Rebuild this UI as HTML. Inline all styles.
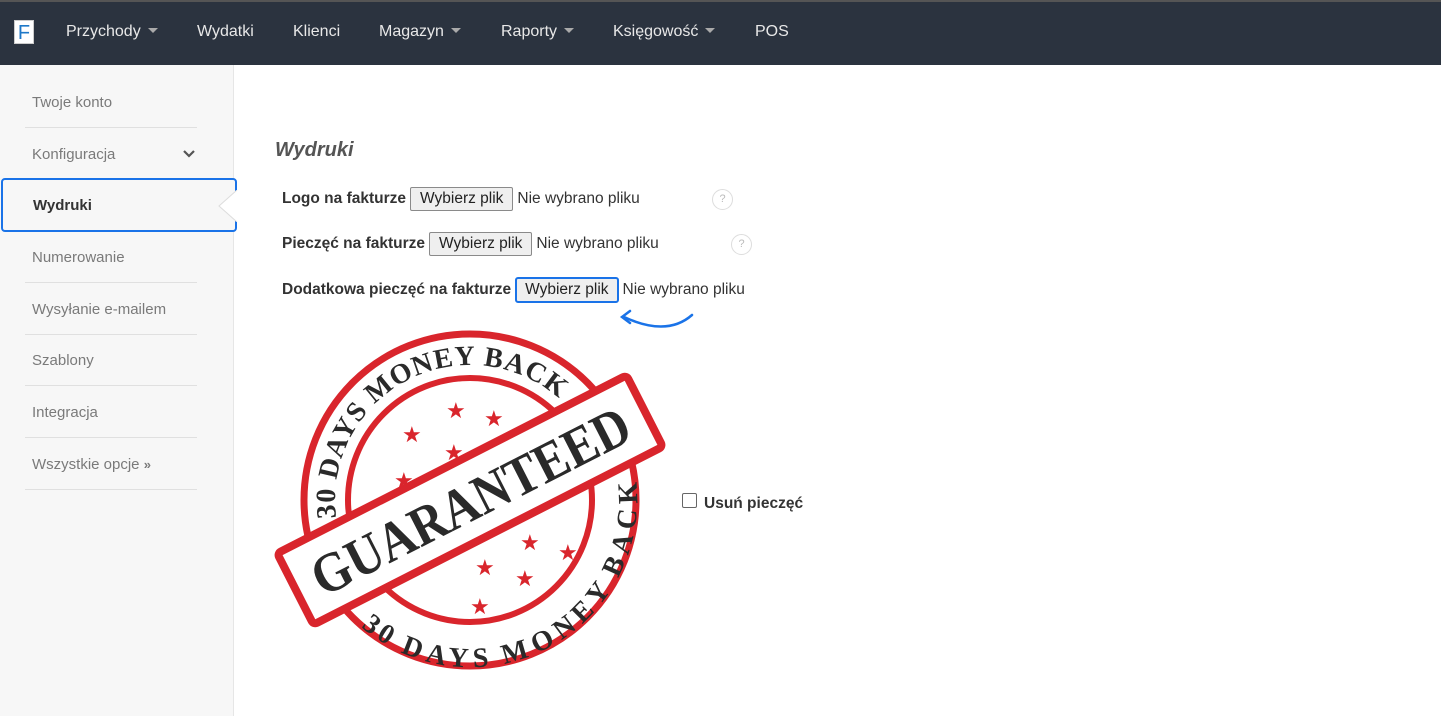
<!DOCTYPE html>
<html><head><meta charset="utf-8"><style>
*{margin:0;padding:0;box-sizing:border-box}
body{width:1441px;height:716px;overflow:hidden;background:#fff;font-family:"Liberation Sans",Arial,sans-serif;position:relative}
.top{position:absolute;left:0;top:0;width:1441px;height:65px;background:#2b333f;border-top:2px solid #555}
.logo{position:absolute;left:14px;top:18px;width:20px;height:24px;background:#fff;color:#1e78c8;font-size:20px;line-height:24px;text-align:center;border:1px solid #ccc}
.nav{position:absolute;top:21px;color:#e8e8e8;font-size:16px}
.car{display:inline-block;width:0;height:0;border-left:5px solid transparent;border-right:5px solid transparent;border-top:5px solid #aaa;margin-left:7px;vertical-align:3px}
.side{position:absolute;left:0;top:65px;width:234px;height:651px;background:#f7f7f7;border-right:1px solid #e6e6e6}
.it{position:absolute;left:25px;width:172px;height:51px;border-bottom:1px solid #e0e0e0;color:#7a7a7a;font-size:15px;padding-left:7px;line-height:51px}
.act{position:absolute;left:1px;top:178px;width:236px;height:54px;border:2px solid #1a73e8;border-radius:4px;background:#f7f7f7;font-weight:bold;font-size:15px;color:#333;padding-left:30px;line-height:52px}
.lbl{position:absolute;font-size:15.5px;color:#333;font-weight:bold}
.btn{display:inline-block;border:1px solid #8a8a8a;border-radius:2px;background:#efefef;font-weight:normal;padding:2px 9px;font-size:15.5px;color:#222;margin-left:4px}
.nw{font-weight:normal;color:#333;margin-left:4px}
.q{position:absolute;width:21px;height:21px;border:1px solid #ddd;border-radius:50%;color:#bbb;font-size:11px;text-align:center;line-height:19px}
</style></head><body>
<div class="top">
<div class="logo">F</div>
<div class="nav" style="left:66px">Przychody<span class="car"></span></div>
<div class="nav" style="left:197px">Wydatki</div>
<div class="nav" style="left:293px">Klienci</div>
<div class="nav" style="left:379px">Magazyn<span class="car"></span></div>
<div class="nav" style="left:501px">Raporty<span class="car"></span></div>
<div class="nav" style="left:613px">Księgowość<span class="car"></span></div>
<div class="nav" style="left:755px">POS</div>
</div>
<div class="side">
<div class="it" style="top:12px">Twoje konto</div>
<div class="it" style="top:64px">Konfiguracja<svg style="position:absolute;right:2px;top:21px" width="12" height="9"><polyline points="1,1 6,6 11,1" fill="none" stroke="#555" stroke-width="2.2"/></svg></div>
<div class="it" style="top:167px">Numerowanie</div>
<div class="it" style="top:219px">Wysyłanie e-mailem</div>
<div class="it" style="top:270px">Szablony</div>
<div class="it" style="top:322px">Integracja</div>
<div class="it" style="top:374px">Wszystkie opcje <b style="font-size:13px">»</b></div>
</div>
<div class="act">Wydruki</div>
<svg style="position:absolute;left:216px;top:190px" width="22" height="32"><polyline points="21,0 3,16 21,32" fill="#fff" stroke="#ddd"/></svg>
<div style="position:absolute;left:275px;top:139px;font-size:20px;font-style:italic;font-weight:bold;color:#555">Wydruki</div>
<div class="lbl" style="left:282px;top:187px">Logo na fakturze<span class="btn">Wybierz plik</span><span class="nw">Nie wybrano pliku</span></div>
<div class="q" style="left:712px;top:189px">?</div>
<div class="lbl" style="left:282px;top:232px">Pieczęć na fakturze<span class="btn">Wybierz plik</span><span class="nw">Nie wybrano pliku</span></div>
<div class="q" style="left:731px;top:234px">?</div>
<div class="lbl" style="left:282px;top:277px">Dodatkowa pieczęć na fakturze<span class="btn" style="border:2px solid #1a73e8;border-radius:3px;padding:2px 8px">Wybierz plik</span><span class="nw">Nie wybrano pliku</span></div>
<svg style="position:absolute;left:612px;top:305px" width="90" height="30"><path d="M80 10 Q55 32 12 12" fill="none" stroke="#1a73e8" stroke-width="2.5" stroke-linecap="round"/><path d="M18 6 L10 12 L18 18" fill="none" stroke="#1a73e8" stroke-width="2.5" stroke-linecap="round"/></svg>
<svg style="position:absolute;left:270px;top:320px" width="420" height="360" viewBox="0 0 420 360">
<g transform="translate(200,180)">
<circle r="166" fill="none" stroke="#d9252c" stroke-width="7"/>
<circle r="122" fill="none" stroke="#d9252c" stroke-width="6"/>
<defs><path id="arc" d="M-135 0 A135 135 0 0 1 135 0"/><path id="arc2" d="M-158 0 A158 158 0 0 0 158 0"/></defs>
<text font-family="Liberation Serif,serif" font-weight="bold" font-size="28" fill="#2a2a2a" transform="rotate(-25)"><textPath href="#arc2" startOffset="50%" text-anchor="middle"></textPath></text>
<text font-family="Liberation Serif,serif" font-weight="bold" font-size="28" fill="#2a2a2a" transform="rotate(-28)" letter-spacing="1"><textPath href="#arc" startOffset="50%" text-anchor="middle">30 DAYS MONEY BACK</textPath></text>
<path id="arc3" d="M-128 0 A128 128 0 0 0 128 0" fill="none"/>
<text font-family="Liberation Serif,serif" font-weight="bold" font-size="28" fill="#2a2a2a" transform="rotate(-28)" dy="20"><textPath href="#arc3" startOffset="50%" text-anchor="middle" dominant-baseline="hanging">30 DAYS MONEY BACK</textPath></text>
<g fill="#d9252c" font-size="22">
<text x="-24" y="-82">★</text><text x="14" y="-74">★</text><text x="-68" y="-58">★</text><text x="-26" y="-40">★</text><text x="-76" y="-12">★</text>
<text x="50" y="50">★</text><text x="88" y="60">★</text><text x="5" y="75">★</text><text x="45" y="86">★</text><text x="0" y="114">★</text>
</g>
<g transform="rotate(-27)">
<rect x="-196" y="-40" width="392" height="80" fill="#fff" stroke="#d9252c" stroke-width="8" rx="4"/>
<text x="0" y="20" text-anchor="middle" font-family="Liberation Serif,serif" font-weight="bold" font-size="56" fill="#2a2a2a" textLength="350" lengthAdjust="spacingAndGlyphs">GUARANTEED</text>
</g>
</g>
</svg>
<div style="position:absolute;left:682px;top:493px;width:15px;height:15px;border:1px solid #666;border-radius:2px"></div>
<div class="lbl" style="left:704px;top:495px">Usuń pieczęć</div>
</body></html>
